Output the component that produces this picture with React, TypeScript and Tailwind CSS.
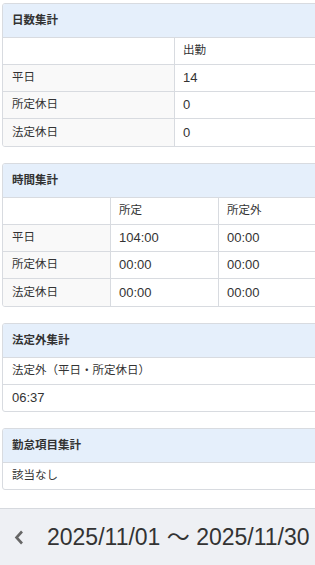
const font = { fontFamily: '"Liberation Sans", "Noto Sans CJK JP", sans-serif' };

type Row = { label: string; values: string[] };

function Card({ title, children }: { title: string; children: React.ReactNode }) {
  return (
    <div className="mb-4 w-[345px] overflow-hidden rounded-[3px] border border-[#d8dbe0] bg-white">
      <div className="flex h-[34px] items-center border-b border-[#d8dbe0] bg-[#e5effb] px-[9px] text-[11.5px] font-bold text-[#333]">
        {title}
      </div>
      {children}
    </div>
  );
}

function Table({ widths, head, rows }: { widths: string[]; head: string[]; rows: Row[] }) {
  return (
    <div>
      <div className="flex h-[27px] border-b border-[#d8dbe0]">
        <div className={`${widths[0]} shrink-0 border-r border-[#d8dbe0]`} />
        {head.map((h, i) => (
          <div
            key={h}
            className={`${widths[i + 1]} flex shrink-0 items-center border-r border-[#d8dbe0] px-[8px] text-[11.5px] text-[#333]`}
          >
            {h}
          </div>
        ))}
      </div>
      {rows.map((r, ri) => (
        <div
          key={r.label}
          className={`flex h-[27px] ${ri < rows.length - 1 ? "border-b border-[#d8dbe0]" : ""}`}
        >
          <div
            className={`${widths[0]} flex shrink-0 items-center border-r border-[#d8dbe0] bg-[#f9f9f9] px-[9px] text-[11.5px] text-[#333]`}
          >
            {r.label}
          </div>
          {r.values.map((v, i) => (
            <div
              key={i}
              className={`${widths[i + 1]} flex shrink-0 items-center border-r border-[#d8dbe0] px-[8px] text-[13px] text-[#333]`}
            >
              {v}
            </div>
          ))}
        </div>
      ))}
    </div>
  );
}

export default function App() {
  return (
    <div className="flex h-[565px] w-[315px] flex-col overflow-hidden bg-white" style={font}>
      <div className="flex-1 pl-[2px] pt-[3px]">
        <Card title="日数集計">
          <Table
            widths={["w-[172px]", "w-[172px]"]}
            head={["出勤"]}
            rows={[
              { label: "平日", values: ["14"] },
              { label: "所定休日", values: ["0"] },
              { label: "法定休日", values: ["0"] },
            ]}
          />
        </Card>

        <Card title="時間集計">
          <Table
            widths={["w-[108px]", "w-[108px]", "w-[108px]"]}
            head={["所定", "所定外"]}
            rows={[
              { label: "平日", values: ["104:00", "00:00"] },
              { label: "所定休日", values: ["00:00", "00:00"] },
              { label: "法定休日", values: ["00:00", "00:00"] },
            ]}
          />
        </Card>

        <Card title="法定外集計">
          <div className="flex h-[27px] items-center border-b border-[#d8dbe0] px-[9px] text-[11.5px] text-[#333]">
            法定外（平日・所定休日）
          </div>
          <div className="flex h-[26px] items-center px-[9px] text-[13px] text-[#333]">06:37</div>
        </Card>

        <Card title="勤怠項目集計">
          <div className="flex h-[26px] items-center px-[9px] text-[11.5px] text-[#333]">該当なし</div>
        </Card>
      </div>

      <div className="flex h-[57px] shrink-0 items-center border-t border-[#d6d9de] bg-[#eef0f4]">
        <svg width="10" height="15" viewBox="0 0 10 15" className="ml-[14px]">
          <polyline points="8,1.5 2.5,7.5 8,13.5" fill="none" stroke="#666" strokeWidth="2.6" />
        </svg>
        <span className="ml-[23px] whitespace-nowrap text-[23px] text-[#333]">2025/11/01 ～ 2025/11/30</span>
      </div>
    </div>
  );
}
